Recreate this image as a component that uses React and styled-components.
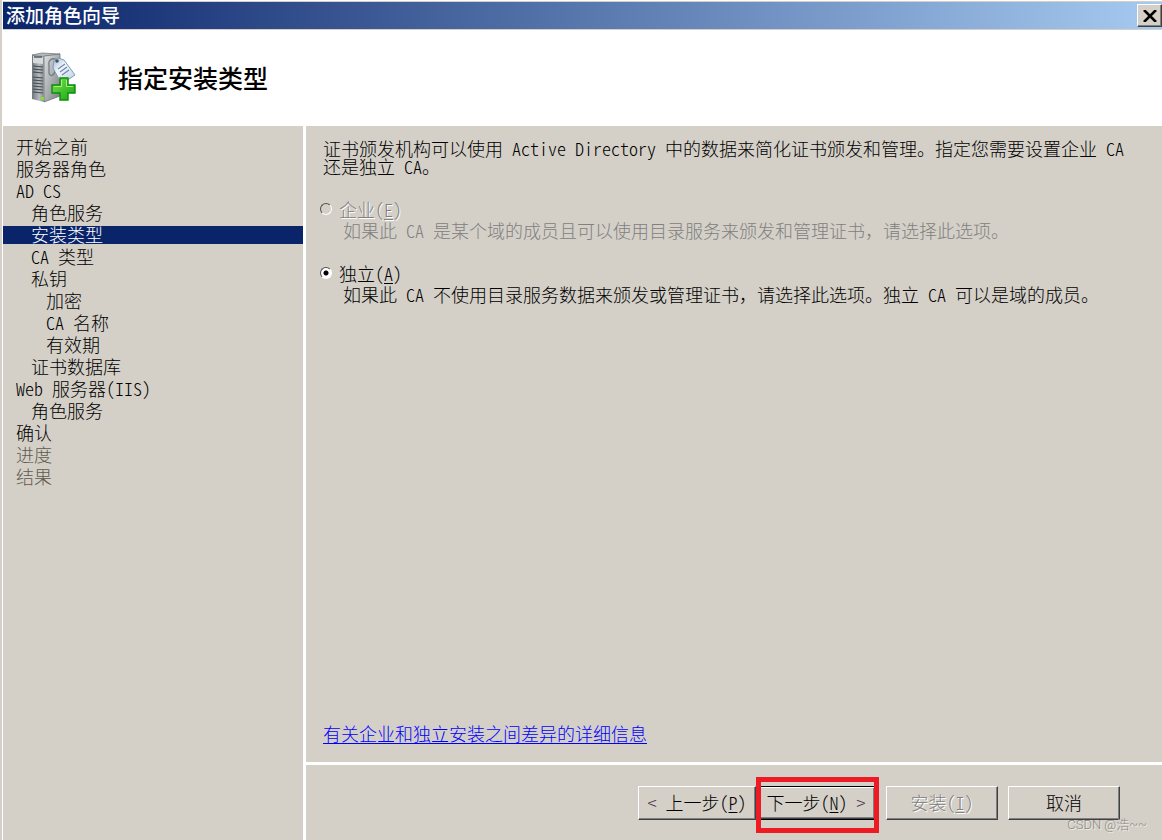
import React, { useState } from "react";
import styled, { createGlobalStyle, css } from "styled-components";

const steps = [
  { label: "开始之前", level: 0 },
  { label: "服务器角色", level: 0 },
  { label: "AD CS", level: 0 },
  { label: "角色服务", level: 1 },
  { label: "安装类型", level: 1, current: true },
  { label: "CA 类型", level: 1 },
  { label: "私钥", level: 1 },
  { label: "加密", level: 2 },
  { label: "CA 名称", level: 2 },
  { label: "有效期", level: 2 },
  { label: "证书数据库", level: 1 },
  { label: "Web 服务器(IIS)", level: 0 },
  { label: "角色服务", level: 1 },
  { label: "确认", level: 0 },
  { label: "进度", level: 0, pending: true },
  { label: "结果", level: 0, pending: true },
];

const options = [
  {
    id: "enterprise",
    label: "企业",
    accessKey: "E",
    disabled: true,
    hint: ["如果此 CA 是某个域的成员且可以使用目录服务来颁发和管理证书", "请选择此选项。"],
  },
  {
    id: "standalone",
    label: "独立",
    accessKey: "A",
    hint: [
      "如果此 CA 不使用目录服务数据来颁发或管理证书",
      "请选择此选项。独立 CA 可以是域的成员。",
    ],
  },
];

function ServerIcon() {
  return (
    <svg width="48" height="52" viewBox="0 0 48 52" aria-hidden="true">
      <defs>
        <linearGradient id="front" x1="0" y1="0" x2="1" y2="0">
          <stop offset="0" stopColor="#70777c" />
          <stop offset="0.6" stopColor="#b4babd" />
          <stop offset="1" stopColor="#878e92" />
        </linearGradient>
        <linearGradient id="side" x1="0" y1="0" x2="1" y2="1">
          <stop offset="0" stopColor="#dfe1e2" />
          <stop offset="1" stopColor="#777c7f" />
        </linearGradient>
        <linearGradient id="tag" x1="0" y1="0" x2="1" y2="1">
          <stop offset="0" stopColor="#9fb8d0" />
          <stop offset="0.4" stopColor="#f2f7fb" />
          <stop offset="1" stopColor="#b9d1e6" />
        </linearGradient>
        <linearGradient id="plus" x1="0" y1="0" x2="1" y2="1">
          <stop offset="0" stopColor="#7be04f" />
          <stop offset="1" stopColor="#12a90f" />
        </linearGradient>
      </defs>
      <path d="M2 3 L12 1 L30 2 L17 5 Z" fill="#b4b9bc" stroke="#7b8184" strokeWidth="0.8" />
      <path d="M14 4 L30 2 V44 L14 50 Z" fill="url(#side)" stroke="#6d7376" strokeWidth="0.8" />
      <path d="M2 3 L14 4 V50 L2 47 Z" fill="url(#front)" />
      <path d="M3 4 L13 5 V12 L3 11 Z" fill="#d5dadd" />
      <path d="M4 5 H12" stroke="#353b40" strokeWidth="1.2" />
      <g stroke="#454c51" strokeWidth="1.2">
        <path d="M3 14 l10 1 M3 17 l10 1 M3 20 l10 1" />
        <path d="M3 25 l10 1 M3 28 l10 1 M3 31 l10 1 M3 34 l10 1 M3 37 l10 1 M3 40 l10 1" />
      </g>
      <rect x="11" y="45" width="3" height="3" fill="#7fe321" />
      <path d="M27 8 C22 5 18 8 19 14 V21 C20 25 24 24 25 19" fill="none" stroke="#777e82" strokeWidth="1.3" />
      <path d="M24 8 L28 6 L34 8 L45 23 L36 29 L29 27 L23 16 Z" fill="url(#tag)" stroke="#7f9cb8" strokeWidth="1" />
      <circle cx="27" cy="9" r="1.8" fill="#46545e" />
      <path d="M28 17 L35 12 M30 20 L37 15 M32 23 L39 18" stroke="#7384b3" strokeWidth="1.2" />
      <path
        d="M30 26 H38 V33 H45 V41 H38 V48 H30 V41 H22 V33 H30 Z"
        fill="url(#plus)"
        stroke="#118b0f"
        strokeWidth="1.4"
      />
      <path d="M31.500 28 V34.500 H24 M36.500 28 V34.500 H43" fill="none" stroke="#a9ee83" strokeWidth="1" />
    </svg>
  );
}

function CloseIcon() {
  return (
    <svg width="14" height="12" viewBox="0 0 14 12" aria-hidden="true">
      <path d="M1 0 L13 12 M13 0 L1 12" stroke="#000" strokeWidth="2.600" />
    </svg>
  );
}

function App() {
  const [type, setType] = useState("standalone");

  return (
    <>
      <GlobalStyle />
      <Window>
        <TitleBar>
          <Caption>添加角色向导</Caption>
          <CloseButton type="button" aria-label="关闭">
            <CloseIcon />
          </CloseButton>
        </TitleBar>

        <Header>
          <ServerIcon />
          <Heading>指定安装类型</Heading>
        </Header>

        <Body>
          <StepList>
            {steps.map((step, i) => (
              <Step key={i} $level={step.level} $current={step.current} $pending={step.pending}>
                {step.label}
              </Step>
            ))}
          </StepList>

          <Panel>
            <Content>
              <Intro>
                证书颁发机构可以使用 Active Directory 中的数据来简化证书颁发和管理。指定您需要设置企业 CA 还是独立 CA。
              </Intro>
              {options.map((option) => (
                <Option key={option.id}>
                  <Radio
                    type="radio"
                    name="install-type"
                    id={option.id}
                    disabled={option.disabled}
                    checked={type === option.id}
                    onChange={() => setType(option.id)}
                  />
                  <OptionLabel htmlFor={option.id} $disabled={option.disabled}>
                    {option.label}(<Key>{option.accessKey}</Key>)
                  </OptionLabel>
                  <Hint $disabled={option.disabled}>
                    {option.hint[0]}
                    <FullWidth>，</FullWidth>
                    {option.hint[1]}
                  </Hint>
                </Option>
              ))}
              <MoreLink href="#details">有关企业和独立安装之间差异的详细信息</MoreLink>
            </Content>

            <Footer>
              <Pair>
                <Button type="button" $width={118}>
                  <Arrow>&lt;</Arrow> 上一步(<Key>P</Key>)
                </Button>
                <Marked>
                  <Button type="button" $width={120} $primary>
                    下一步(<Key>N</Key>) <Arrow>&gt;</Arrow>
                  </Button>
                </Marked>
              </Pair>
              <Button type="button" $width={112} disabled>
                安装(<Key>I</Key>)
              </Button>
              <Button type="button" $width={112}>
                取消
              </Button>
            </Footer>
          </Panel>
        </Body>
        <Watermark>CSDN @浩~~</Watermark>
      </Window>
    </>
  );
}

export default App;


const GlobalStyle = createGlobalStyle`
  * {
    box-sizing: border-box;
  }

  body {
    margin: 0;
    background: #d4d0c8;
    color: #000;
    font-family: "Noto Sans CJK SC", sans-serif;
    font-size: 18px;
    font-weight: 300;
    line-height: 18px;
    font-feature-settings: "hwid";
    text-spacing-trim: space-all;
    text-autospace: no-autospace;
  }
`;

const embossed = css`
  color: #808080;
  text-shadow: 1px 1px 0 #fff;
`;

const raised = css`
  border: 1px solid;
  border-color: #fff #404040 #404040 #fff;
  box-shadow: inset -1px -1px 0 #808080;
  background: #d4d0c8;
`;

const Window = styled.div`
  position: relative;
  display: flex;
  flex-direction: column;
  min-height: 100vh;
  padding: 2px 0 0 1px;
  border-left: 2px solid #d4d0c8;
  box-shadow: inset 1px 1px 0 #fff;
`;

const TitleBar = styled.div`
  display: flex;
  align-items: center;
  justify-content: space-between;
  height: 27px;
  padding-left: 3px;
  background: linear-gradient(to right, #0a246a, #a6caf0);
`;

const Caption = styled.span`
  padding-bottom: 2px;
  color: #fff;
  font-size: 19px;
  font-weight: 500;
`;

const CloseButton = styled.button`
  ${raised}
  display: flex;
  align-items: center;
  justify-content: center;
  width: 25px;
  height: 23px;
  padding: 0;
`;

const Header = styled.header`
  display: flex;
  align-items: center;
  gap: 40px;
  height: 96px;
  margin-top: 1px;
  padding-left: 27px;
  background: #fff;
`;

const Heading = styled.h1`
  margin: 0;
  padding-bottom: 2px;
  font-size: 25px;
  font-weight: 500;
  line-height: 30px;
`;

const Body = styled.div`
  display: flex;
  flex: 1;
`;

const StepList = styled.ul`
  display: flex;
  flex-direction: column;
  flex: none;
  gap: 4px;
  width: 300px;
  margin: 0;
  padding: 12px 0 0;
  list-style: none;
`;

const Step = styled.li`
  padding: 0 0 2px ${({ $level }) => 13 + $level * 15}px;
  color: ${({ $current, $pending }) => ($current ? "#fff" : $pending ? "#605a50" : "#000")};
  background: ${({ $current }) => ($current ? "#0a246a" : "transparent")};
  line-height: 16px;
`;

const Panel = styled.main`
  display: flex;
  flex-direction: column;
  flex: 1;
  border-left: 3px solid #fff;
`;

const Content = styled.section`
  display: flex;
  flex-direction: column;
  align-items: flex-start;
  flex: 1;
  padding: 13px 32px 20px 17px;
`;

const Intro = styled.p`
  margin: 0 0 25px;
`;

const Option = styled.div`
  display: grid;
  grid-template-columns: 16px 1fr;
  row-gap: 3px;
  margin: 0 0 25px -3px;
`;

const Radio = styled.input`
  appearance: none;
  width: 12px;
  height: 12px;
  margin: 3px 0;
  border: 1px solid;
  border-color: #505050 #fff #fff #505050;
  border-radius: 50%;
  background: ${({ disabled }) => (disabled ? "#d4d0c8" : "#fff")};

  &:checked {
    background: radial-gradient(circle, #000 2px, #fff 3px);
  }
`;

const OptionLabel = styled.label`
  padding-left: 3px;
  ${({ $disabled }) => $disabled && embossed}
`;

const Key = styled.span`
  text-decoration: underline;
  text-decoration-thickness: 1px;
  text-underline-offset: 2px;
`;

const Hint = styled.p`
  grid-column: 2;
  margin: 0;
  padding-left: 7px;
  color: ${({ $disabled }) => ($disabled ? "#808080" : "#000")};
`;

/* hwid would halve the comma as well */
const FullWidth = styled.span`
  font-feature-settings: normal;
`;

const MoreLink = styled.a`
  margin-top: auto;
  color: #00f;
  text-decoration-thickness: 1px;
  text-underline-offset: 2px;
`;

const Footer = styled.footer`
  display: flex;
  justify-content: flex-end;
  gap: 10px;
  padding: 21px 42px 20px 18px;
  border-top: 3px solid #fff;
`;

const Pair = styled.div`
  display: flex;
`;

const Button = styled.button`
  ${raised}
  width: ${({ $width }) => $width}px;
  height: 34px;
  padding: 0 0 2px;
  color: #000;
  font: inherit;
  font-feature-settings: inherit;

  ${({ $primary }) =>
    $primary &&
    css`
      border-color: #000;
      box-shadow: inset 1px 1px 0 #fff, inset -1px -1px 0 #404040, inset -2px -2px 0 #808080;
    `}

  &:disabled {
    ${embossed}
  }
`;

const Arrow = styled.span`
  color: #4a3050;
`;

/* red frame around the button to press */
const Marked = styled.div`
  position: relative;

  &::after {
    content: "";
    position: absolute;
    inset: -9px -3px -13px 0;
    border: 5px solid #ed1c24;
    pointer-events: none;
  }
`;

const Watermark = styled.span`
  position: absolute;
  right: 15px;
  bottom: 6px;
  color: #8a8883;
  font-family: Roboto, "Noto Sans CJK SC", sans-serif;
  font-size: 13px;
  font-feature-settings: normal;
  text-shadow: 1px 1px 0 #efede8;
`;
